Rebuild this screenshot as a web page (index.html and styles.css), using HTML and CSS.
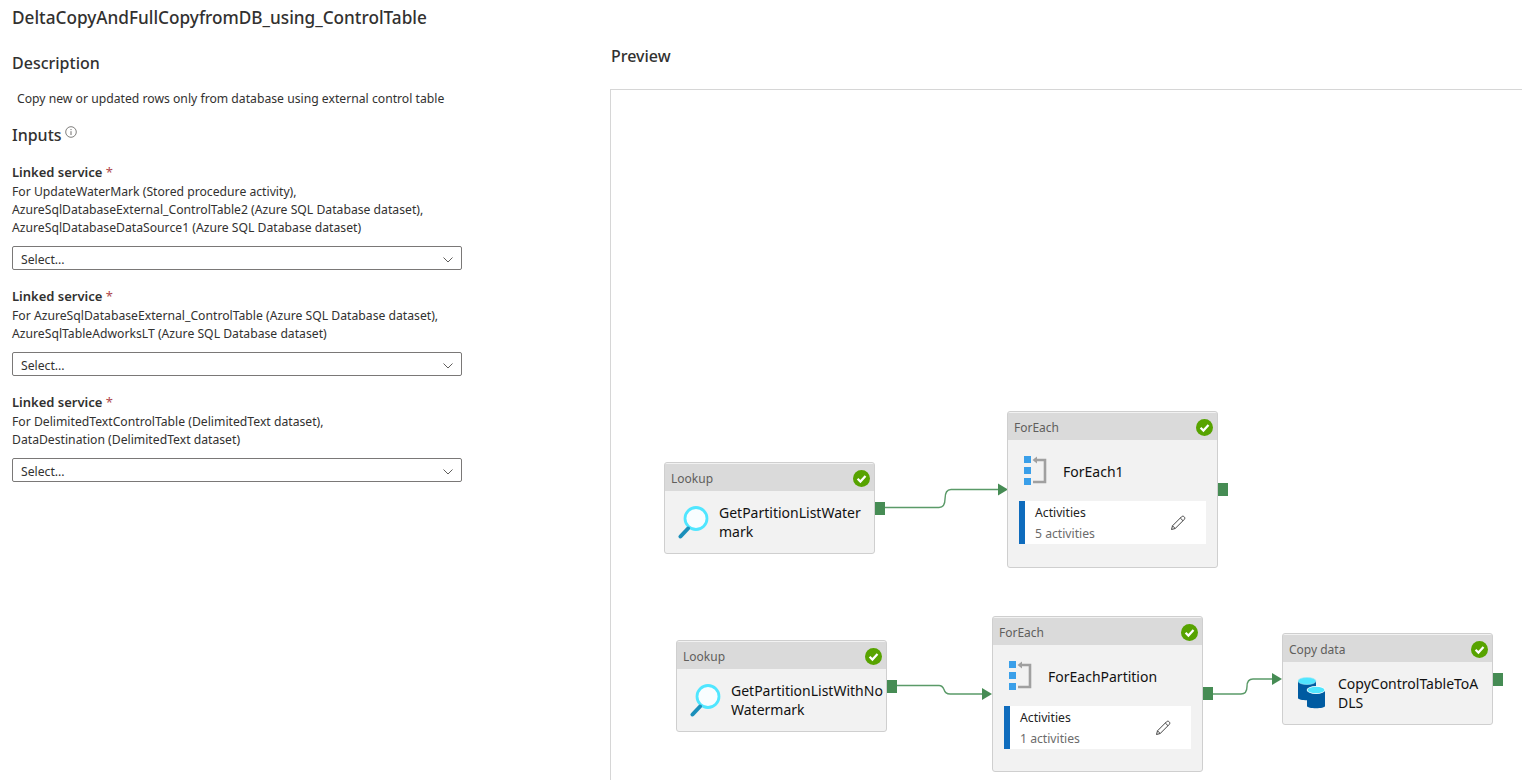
FILE: index.html
```html
<!DOCTYPE html>
<html lang="en">
<head>
  <meta charset="UTF-8" />
  <title>DeltaCopyAndFullCopyfromDB_using_ControlTable</title>
  <link rel="stylesheet" href="styles.css">
</head>
<body>
  <svg class="defs" width="0" height="0">
    <defs>
      <symbol id="check" viewBox="0 0 17 17">
        <circle cx="8.5" cy="8.5" r="8.5" fill="#57a300"/>
        <path d="M4.6 8.8 7.4 11.6 12.5 5.9" fill="none" stroke="#fff" stroke-width="2.2"/>
      </symbol>
      <symbol id="lookup" viewBox="0 0 36 36">
        <circle cx="18" cy="15.500" r="11" fill="#f8fdff" stroke="#50e6ff" stroke-width="2.8"/>
        <path d="M2.500 33.500 10 25.500" stroke="#1b8fba" stroke-width="4" stroke-linecap="round"/>
      </symbol>
      <symbol id="foreach" viewBox="0 0 24 30">
        <rect x="0" y="0" width="7" height="7" fill="#3a9fe9"/>
        <rect x="0" y="11" width="7" height="7" fill="#3a9fe9"/>
        <rect x="0" y="22" width="7" height="7" fill="#3a9fe9"/>
        <path d="M11 4H21V26H9" fill="none" stroke="#a0a0a0" stroke-width="2.600"/>
        <path d="M8.500 4 13 .5V7.500Z" fill="#a0a0a0"/>
      </symbol>
      <symbol id="pencil" viewBox="0 0 16 16">
        <path d="M1.500 14.500 2.500 10.800 11.500 1.800C12.300 1 13.400 1 14.200 1.800 15 2.600 15 3.700 14.200 4.500L5.200 13.500ZM2.500 10.800 5.200 13.500M10.300 3 13 5.700" fill="none" stroke="#444" stroke-width="1"/>
      </symbol>
      <symbol id="chevron" viewBox="0 0 10 6">
        <path d="M.5.500 5 5 9.500.500" fill="none" stroke="#605e5c" stroke-width="1"/>
      </symbol>
      <symbol id="copy" viewBox="0 0 28 32">
        <path d="M0 4V21C0 24 18 24 18 21V4Z" fill="#005ba1"/>
        <ellipse cx="9" cy="4" rx="9" ry="3.500" fill="#50e6ff" stroke="#9ee9f7" stroke-width=".6"/>
        <path d="M9 13V29C9 32 27 32 27 29V13Z" fill="#005ba1"/>
        <ellipse cx="18" cy="13" rx="9.300" ry="4" fill="#fff"/>
        <ellipse cx="18" cy="13" rx="8.500" ry="3.200" fill="#50e6ff"/>
      </symbol>
    </defs>
  </svg>

  <div class="page">
    <div class="left-col">
      <h1 class="page-title">DeltaCopyAndFullCopyfromDB_using_ControlTable</h1>
      <h2 class="section-title">Description</h2>
      <p class="description">Copy new or updated rows only from database using external control table</p>
      <h2 class="inputs-title">Inputs
        <svg class="info-icon" width="12" height="12" viewBox="0 0 12 12">
          <circle cx="6" cy="6" r="5.300" fill="none" stroke="#605e5c" stroke-width=".8"/>
          <path d="M6 5.200V9M6 3V4.100" stroke="#605e5c" stroke-width=".9"/>
        </svg>
      </h2>

      <div class="field">
        <div class="field-label">Linked service <span class="req">*</span></div>
        <div class="field-help">For UpdateWaterMark (Stored procedure activity),<br>AzureSqlDatabaseExternal_ControlTable2 (Azure SQL Database dataset),<br>AzureSqlDatabaseDataSource1 (Azure SQL Database dataset)</div>
        <div class="select-box">Select...<svg class="chevron" width="10" height="6"><use href="#chevron"/></svg></div>
      </div>

      <div class="field">
        <div class="field-label">Linked service <span class="req">*</span></div>
        <div class="field-help">For AzureSqlDatabaseExternal_ControlTable (Azure SQL Database dataset),<br>AzureSqlTableAdworksLT (Azure SQL Database dataset)</div>
        <div class="select-box">Select...<svg class="chevron" width="10" height="6"><use href="#chevron"/></svg></div>
      </div>

      <div class="field">
        <div class="field-label">Linked service <span class="req">*</span></div>
        <div class="field-help">For DelimitedTextControlTable (DelimitedText dataset),<br>DataDestination (DelimitedText dataset)</div>
        <div class="select-box">Select...<svg class="chevron" width="10" height="6"><use href="#chevron"/></svg></div>
      </div>
    </div>

    <div class="right-col">
      <h2 class="preview-title">Preview</h2>
      <div class="canvas">
        <svg class="edges" width="912" height="691">
          <path d="M274 418.500H328C332 418.500 334 416 334 410S336 400.500 340 400.500H388" />
          <path d="M285 596.500H328C331 596.500 332 598 333 600.500 334 604 336 605 339 605H373" />
          <path d="M601 605H630C634 605 636 602 636 597.500S638 590 642 590H663" />
          <path class="arrow" d="M387 394.500 397 400.500 387 406.500Z" />
          <path class="arrow" d="M371 599 381 605 371 611Z" />
          <path class="arrow" d="M661 584 671 590 661 596Z" />
        </svg>

        <div class="node node-lookup-a">
          <div class="node-head"><span>Lookup</span><svg width="17" height="17"><use href="#check"/></svg></div>
          <div class="node-body">
            <svg class="node-icon" width="36" height="36"><use href="#lookup"/></svg>
            <div class="node-name">GetPartitionListWater<br>mark</div>
          </div>
          <div class="port"></div>
        </div>

        <div class="node node-lookup-b">
          <div class="node-head"><span>Lookup</span><svg width="17" height="17"><use href="#check"/></svg></div>
          <div class="node-body">
            <svg class="node-icon" width="36" height="36"><use href="#lookup"/></svg>
            <div class="node-name">GetPartitionListWithNo<br>Watermark</div>
          </div>
          <div class="port"></div>
        </div>

        <div class="node node-foreach-a">
          <div class="node-head"><span>ForEach</span><svg width="17" height="17"><use href="#check"/></svg></div>
          <div class="foreach-top">
            <svg class="foreach-icon" width="24" height="30"><use href="#foreach"/></svg>
            <div class="node-name">ForEach1</div>
          </div>
          <div class="activities">
            <div class="activities-text">
              <div>Activities</div>
              <div class="activities-count">5 activities</div>
            </div>
            <svg class="pencil" width="16" height="16"><use href="#pencil"/></svg>
          </div>
          <div class="port port-foreach"></div>
        </div>

        <div class="node node-foreach-b">
          <div class="node-head"><span>ForEach</span><svg width="17" height="17"><use href="#check"/></svg></div>
          <div class="foreach-top">
            <svg class="foreach-icon" width="24" height="30"><use href="#foreach"/></svg>
            <div class="node-name">ForEachPartition</div>
          </div>
          <div class="activities">
            <div class="activities-text">
              <div>Activities</div>
              <div class="activities-count">1 activities</div>
            </div>
            <svg class="pencil" width="16" height="16"><use href="#pencil"/></svg>
          </div>
          <div class="port port-foreach"></div>
        </div>

        <div class="node node-copy">
          <div class="node-head"><span>Copy data</span><svg width="17" height="17"><use href="#check"/></svg></div>
          <div class="node-body">
            <svg class="node-icon copy-icon" width="28" height="32"><use href="#copy"/></svg>
            <div class="node-name">CopyControlTableToA<br>DLS</div>
          </div>
          <div class="port"></div>
        </div>
      </div>
    </div>
  </div>
</body>
</html>
```

FILE: styles.css
```css
* {
  box-sizing: border-box;
}

html, body {
  margin: 0;
  padding: 0;
  height: 100%;
  overflow: hidden;
}

body {
  font-family: "Noto Sans", "Open Sans", Arial, sans-serif;
  font-size: 12.200px;
  background: #fff;
  color: #323130;
}

.defs {
  position: absolute;
}

.page {
  display: flex;
  height: 780px;
}

.left-col {
  width: 611px;
  padding: 0 0 0 12px;
}

.page-title {
  margin: 7px 0 0;
  font-size: 17.200px;
  line-height: 21px;
  font-weight: 500;
}

.section-title {
  margin: 25px 0 0;
  font-size: 16px;
  line-height: 21px;
  font-weight: 500;
}

.description {
  margin: 16px 0 0 5px;
  line-height: 18px;
}

.inputs-title {
  margin: 17px 0 0;
  font-size: 16px;
  line-height: 21px;
  font-weight: 500;
}

.info-icon {
  vertical-align: 3px;
  margin-left: -1px;
}

.field {
  width: 450px;
  margin-bottom: 17px;
}

.inputs-title + .field {
  margin-top: 17px;
}

.field-label {
  margin-bottom: 1px;
  font-size: 13px;
  line-height: 19px;
  font-weight: 600;
}

.req {
  color: #b0474c;
  font-weight: 400;
}

.field-help {
  line-height: 18px;
  white-space: nowrap;
}

.select-box {
  display: flex;
  align-items: center;
  justify-content: space-between;
  height: 24px;
  margin-top: 9px;
  padding: 2px 8px 0 8px;
  border: 1px solid #7a7877;
  border-radius: 2px;
}

.chevron {
  margin-top: 1px;
}

.right-col {
  flex: 1;
  display: flex;
  flex-direction: column;
}

.preview-title {
  margin: 46px 0 0;
  font-size: 16px;
  line-height: 21px;
  font-weight: 500;
}

.canvas {
  position: relative;
  flex: 1;
  margin: 22px 0 0 -1px;
  border-top: 1px solid #d6d6d6;
  border-left: 1px solid #d6d6d6;
}

.edges {
  position: absolute;
  left: 0;
  top: -1px;
}

.edges path {
  fill: none;
  stroke: #5a9a68;
  stroke-width: 1.400;
}

.edges .arrow {
  fill: #468c54;
  stroke: none;
}

/* nodes sit on the free canvas */
.node {
  position: absolute;
  width: 211px;
  background: #f2f2f2;
  border: 1px solid #cfcfcf;
  border-radius: 3px;
  padding-top: 1px;
}

.node-lookup-a { left: 53px; top: 372px; height: 92px; }
.node-lookup-b { left: 65px; top: 550px; height: 92px; }
.node-foreach-a { left: 396px; top: 321px; height: 157px; }
.node-foreach-b { left: 381px; top: 526px; height: 156px; }
.node-copy { left: 671px; top: 543px; height: 92px; }

.node-head {
  display: flex;
  align-items: center;
  justify-content: space-between;
  height: 27px;
  padding: 1px 4px 0 6px;
  background: #dadada;
  color: #605e5c;
  font-size: 12px;
}

.node-body {
  display: flex;
  align-items: flex-start;
  padding: 12px 0 0 13px;
}

.node-icon {
  flex: none;
}

.node-name {
  margin: 0 0 0 5px;
  font-size: 14px;
  line-height: 19px;
  color: #111;
  white-space: nowrap;
}

.copy-icon {
  margin: 3px 0 0 2px;
}

.copy-icon + .node-name {
  margin-left: 12px;
}

.foreach-top {
  display: flex;
  align-items: center;
  height: 61px;
  padding-left: 16px;
}

.foreach-top .node-name {
  margin: 1px 0 0 15px;
}

.activities {
  display: flex;
  align-items: center;
  justify-content: space-between;
  height: 43px;
  margin: 0 11px;
  padding: 0 20px 0 10px;
  background: #fff;
  border-left: 6px solid #0f6cbd;
}

.activities-text {
  line-height: 21px;
  color: #222;
}

.activities-count {
  color: #6b6b6b;
}

.port {
  position: absolute;
  left: 210px;
  top: 39px;
  width: 10px;
  height: 13px;
  background: #468c54;
}

.port-foreach {
  top: 70px;
}

.node-foreach-a .port-foreach {
  top: 71px;
}
```
